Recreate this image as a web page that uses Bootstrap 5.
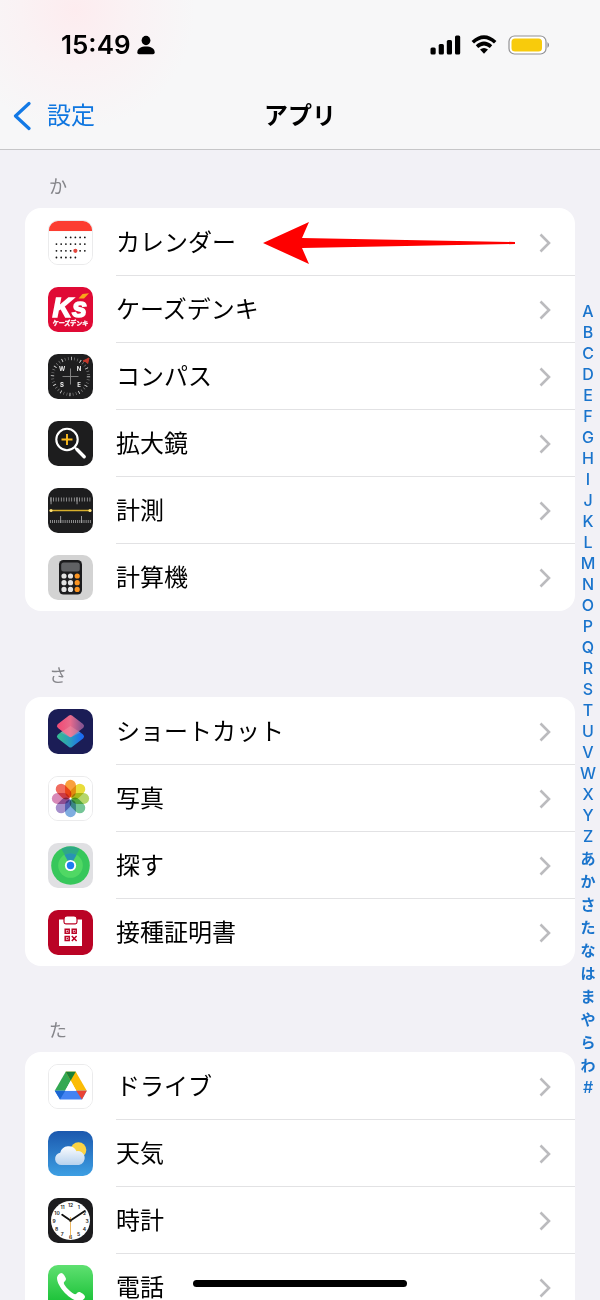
<!DOCTYPE html>
<html lang="ja">
<head>
<meta charset="utf-8">
<meta name="viewport" content="width=device-width, initial-scale=1">
<title>アプリ</title>
<link href="https://cdn.jsdelivr.net/npm/bootstrap@5.3.0/dist/css/bootstrap.min.css" rel="stylesheet">
<style>
  body { font-family: Inter, "Noto Sans CJK JP", sans-serif; background: #f2f1f6; color: #000; }
  a { text-decoration: none; }
  svg { display: block; flex: none; }
  .top-bar { background: radial-gradient(circle at 75px 10px, #fdecef 0, #faf2f4 55px, #f7f7f8 120px); border-bottom: 1px solid #c6c6c8; }
  .status { height: 82px; padding: 8px 50px 0 61px; }
  .clock-text { font-size: 26px; font-weight: 600; line-height: 32px; }
  .gap-status { gap: 10px; }
  .title-row { height: 67px; }
  .title-row h1 { font-size: 24px; line-height: 32px; font-weight: 700; }
  .back { color: #0f76e0; font-size: 24px; line-height: 32px; padding-left: 12px; }
  .apps { padding-left: 25px; }
  .group-label { font-size: 18px; line-height: 24px; color: #85858a; margin: 0; padding: 53px 24px 9px; font-weight: 400; }
  .apps section:first-child .group-label { padding-top: 25px; }
  .app-list { border-radius: 16px; background: #fff; overflow: hidden; padding-top: 1px; }
  .app-row { height: 67px; padding-left: 23px; gap: 23px; color: #000; font-size: 24px; line-height: 32px; }
  .app-row .cell { border-bottom: 1px solid #e2e2e4; padding: 2px 24px 0 0; gap: 24px; }
  li:last-child .cell { border-bottom-color: transparent; }
  .app-icon { width: 45px; height: 45px; border-radius: 10px; }
  .pale { border: 1px solid #ebebec; }
  .index { width: 25px; padding: 151px 0 0 1px; font-weight: 500; font-size: 16px; }
  .index a { color: #1a74cc; height: 21px; line-height: 21px; }
  .index .kana a { font-size: 15px; height: 23px; line-height: 23px; font-weight: 700; }
  .home-bar { width: 214px; height: 7px; border-radius: 4px; background: #000; bottom: 13px; }
</style>
</head>
<body>
<svg width="0" height="0" class="position-absolute" aria-hidden="true">
  <symbol id="chev" viewBox="0 0 12 20"><path d="M1.500 1.500 10 10l-8.500 8.500" fill="none" stroke="#bbbbbe" stroke-width="2.600"/></symbol>
</svg>
<div class="vh-100 d-flex flex-column overflow-hidden">
  <header class="top-bar flex-shrink-0">
    <div class="status d-flex align-items-center">
      <span class="clock-text">15:49</span>
      <svg class="ms-1" width="20" height="20" viewBox="0 0 20 20"><ellipse cx="11" cy="5.500" rx="4.400" ry="4.700"/><path d="M2.300 17.500c0-4.300 4-6 8.700-6s8.700 1.700 8.700 6q0 1.700-1.700 1.700H4q-1.700 0-1.700-1.700z"/></svg>
      <div class="d-flex align-items-center gap-status ms-auto">
        <svg width="31" height="20" viewBox="0 0 31 20"><rect x="0.500" y="12.500" width="5.200" height="7" rx="1.500"/><rect x="8.700" y="9" width="5.200" height="10.500" rx="1.500"/><rect x="16.800" y="5" width="5.200" height="14.500" rx="1.500"/><rect x="25" y="0.500" width="5.200" height="19" rx="1.500"/></svg>
        <svg width="26" height="20" viewBox="0 0 26 20"><g fill="none" stroke="#000" stroke-width="3.600"><path d="M1.800 7.300Q13-3.100 24.200 7.300"/><path d="M6 11.700Q13 5.300 20 11.700"/></g><path d="M9 14.500q4-3 8 0L13 18.800z"/></svg>
        <svg width="43" height="20" viewBox="0 0 43 20"><rect x="2" y="1" width="37" height="18" rx="5.500" fill="#fff" stroke="#929294" stroke-width="1.200"/><rect x="4.500" y="3.500" width="30.500" height="13" rx="3.500" fill="#f8cb0c"/><path d="M40.500 7q3 3 0 6z" fill="#808083"/></svg>
      </div>
    </div>
    <nav class="title-row row g-0 align-items-center">
      <div class="col"><a href="#" class="back d-flex align-items-center"><svg width="19" height="30" viewBox="0 0 19 30"><path d="M17 2.500 3.500 15 17 27.500" fill="none" stroke="#1279e6" stroke-width="3.200" stroke-linecap="round" stroke-linejoin="round"/></svg><span class="ps-3">設定</span></a></div>
      <h1 class="col-auto m-0">アプリ</h1>
      <div class="col"></div>
    </nav>
  </header>

  <div class="d-flex flex-fill overflow-hidden" style="min-height:0">
    <main class="apps flex-fill">
      <section>
        <h2 class="group-label">か</h2>
        <ul class="app-list list-unstyled m-0">
          <li><a href="#" class="app-row d-flex align-items-center">
            <svg class="app-icon pale" viewBox="0 0 45 45"><rect width="45" height="45" fill="#fff"/><rect x="-2" y="-2" width="49" height="12.500" fill="#fc3d31"/><g stroke="#111" stroke-width="1.900" stroke-linecap="round" stroke-dasharray="0 4.950"><path d="M17.700 17.200h20"/><path d="M7.800 24.200h30"/><path d="M7.800 31.200h30"/><path d="M7.800 38.200h20"/></g><circle cx="27.600" cy="31.200" r="2.200" fill="#e2453b"/></svg>
            <span class="cell flex-fill h-100 d-flex align-items-center">カレンダー
              <svg class="ms-auto" width="252" height="42" viewBox="0 0 252 42"><path d="M0 21 46 0l-7 16 213 4v2L39 26l7 16z" fill="#fe0000"/></svg>
              <svg width="12" height="20"><use href="#chev"/></svg></span></a></li>
          <li><a href="#" class="app-row d-flex align-items-center">
            <svg class="app-icon" viewBox="0 0 45 45"><rect width="45" height="45" fill="#e00a35"/><text x="4.500" y="29.500" font-size="27" font-family="Liberation Sans" font-weight="700" font-style="italic" fill="#fff" stroke="#fff" stroke-width="1.500">Ks</text><path d="m34.500 7 6.500-.8-5 5.300h-5.500z" fill="#f9a51a"/><text x="22.500" y="37.800" font-size="6" text-anchor="middle" font-weight="700" fill="#fff" stroke="#fff" stroke-width=".3" font-family="Noto Sans CJK JP">ケーズデンキ</text></svg>
            <span class="cell flex-fill h-100 d-flex align-items-center">ケーズデンキ<svg class="ms-auto" width="12" height="20"><use href="#chev"/></svg></span></a></li>
          <li><a href="#" class="app-row d-flex align-items-center">
            <svg class="app-icon" viewBox="0 0 45 45"><rect width="45" height="45" fill="#1e1e1f"/><circle cx="22.500" cy="22.500" r="18" fill="none" stroke="#858585" stroke-width="3" stroke-dasharray=".6 2.542"/><circle cx="22.500" cy="22.500" r="18" fill="none" stroke="#ccc" stroke-width="3.400" stroke-dasharray=".8 8.625"/><path d="M22.500 14.500v16M14.500 22.500h16" stroke="#8a8a8a" stroke-width=".9"/><g fill="#eee" font-size="6" font-weight="700" font-family="Inter" text-anchor="middle"><text x="14" y="16.500">W</text><text x="31" y="16.500">N</text><text x="14" y="33">S</text><text x="31" y="33">E</text></g><path d="m41 4-1.300 5.500-1.700-1.700-3-.8z" fill="#c5392c" stroke="#c5392c"/></svg>
            <span class="cell flex-fill h-100 d-flex align-items-center">コンパス<svg class="ms-auto" width="12" height="20"><use href="#chev"/></svg></span></a></li>
          <li><a href="#" class="app-row d-flex align-items-center">
            <svg class="app-icon" viewBox="0 0 45 45"><rect width="45" height="45" fill="#1d1d1e"/><circle cx="19" cy="18.500" r="10.700" fill="#181819" stroke="#fff" stroke-width="2.100"/><path d="m27 26.500 2.500 2.500" stroke="#fff" stroke-width="2"/><path d="m29 28.500 7.200 7.200" stroke="#fff" stroke-width="3.400" stroke-linecap="round"/><path d="M19 13v11M13.500 18.500h11" stroke="#f9b920" stroke-width="1.900"/></svg>
            <span class="cell flex-fill h-100 d-flex align-items-center">拡大鏡<svg class="ms-auto" width="12" height="20"><use href="#chev"/></svg></span></a></li>
          <li><a href="#" class="app-row d-flex align-items-center">
            <svg class="app-icon" viewBox="0 0 45 45"><rect width="45" height="45" fill="#1d1d1e"/><g fill="none" stroke="#aaa"><path d="M2.500 11.500h40" stroke-width="4" stroke-dasharray=".8 1.800"/><path d="M2.600 12.800h40" stroke-width="7" stroke-dasharray=".9 25.100"/><path d="M2 33.500h41" stroke-width="3" stroke-dasharray=".8 1.300"/><path d="M12.200 31.500h30" stroke-width="7" stroke-dasharray=".9 20"/></g><path d="M3 22.500h39" stroke="#d8b02c" stroke-width="1.400"/><circle cx="3" cy="22.500" r="1.600" fill="#ffe37a"/><circle cx="42" cy="22.500" r="1.600" fill="#ffe37a"/></svg>
            <span class="cell flex-fill h-100 d-flex align-items-center">計測<svg class="ms-auto" width="12" height="20"><use href="#chev"/></svg></span></a></li>
          <li><a href="#" class="app-row d-flex align-items-center">
            <svg class="app-icon" viewBox="0 0 45 45"><rect width="45" height="45" fill="#d3d3d3"/><rect x="11" y="5" width="23" height="34.500" rx="4.500" fill="#1c1c1e"/><rect x="13.200" y="7.500" width="18.600" height="9" rx="2.500" fill="#606164"/><g stroke="#e2e2e2" stroke-width="5.200" stroke-linecap="round"><path d="M16 21v0M16 27.700v0M16 34.400v0M22.500 21v0M22.500 27.700v0M22.500 34.400v0"/><path stroke="#fb9422" d="M29.200 21v0M29.200 27.700v0M29.200 34.400v0"/></g></svg>
            <span class="cell flex-fill h-100 d-flex align-items-center">計算機<svg class="ms-auto" width="12" height="20"><use href="#chev"/></svg></span></a></li>
        </ul>
      </section>
      <section>
        <h2 class="group-label">さ</h2>
        <ul class="app-list list-unstyled m-0">
          <li><a href="#" class="app-row d-flex align-items-center">
            <svg class="app-icon" viewBox="0 0 45 45"><defs><linearGradient id="sa" x1="0" x2="1"><stop stop-color="#ef4f78"/><stop offset=".5" stop-color="#e86b8c"/><stop offset="1" stop-color="#8a5590"/></linearGradient><linearGradient id="sb" x1="0" x2="1"><stop stop-color="#34b795"/><stop offset=".5" stop-color="#2a9bc0"/><stop offset="1" stop-color="#1c6cf0"/></linearGradient></defs><rect width="45" height="45" fill="#1b1d56"/><path d="m22.500 19 11 8.500-11 8.500-11-8.500z" fill="url(#sb)" stroke="url(#sb)" stroke-width="5" stroke-linejoin="round"/><path d="m22.500 8.500 11 8.500-11 8.500-11-8.500z" fill="url(#sa)" stroke="url(#sa)" stroke-width="5" stroke-linejoin="round"/><path d="m22.500 17 10 6.500-10 5-10-5z" fill="#f5a9b5" opacity=".3"/></svg>
            <span class="cell flex-fill h-100 d-flex align-items-center">ショートカット<svg class="ms-auto" width="12" height="20"><use href="#chev"/></svg></span></a></li>
          <li><a href="#" class="app-row d-flex align-items-center">
            <svg class="app-icon pale" viewBox="0 0 45 45"><defs><rect id="petal" x="-5.700" y="-19.500" width="11.400" height="18.500" rx="5.700"/></defs><rect width="45" height="45" fill="#fff"/><g transform="translate(22.500 22.500)"><use href="#petal" fill="#f9a03c" style="mix-blend-mode:multiply"/><use href="#petal" fill="#e9dd3a" transform="rotate(45)" style="mix-blend-mode:multiply"/><use href="#petal" fill="#b5d66a" transform="rotate(90)" style="mix-blend-mode:multiply"/><use href="#petal" fill="#74c596" transform="rotate(135)" style="mix-blend-mode:multiply"/><use href="#petal" fill="#7fade0" transform="rotate(180)" style="mix-blend-mode:multiply"/><use href="#petal" fill="#a58fcb" transform="rotate(225)" style="mix-blend-mode:multiply"/><use href="#petal" fill="#d88ab8" transform="rotate(270)" style="mix-blend-mode:multiply"/><use href="#petal" fill="#f06c60" transform="rotate(315)" style="mix-blend-mode:multiply"/></g></svg>
            <span class="cell flex-fill h-100 d-flex align-items-center">写真<svg class="ms-auto" width="12" height="20"><use href="#chev"/></svg></span></a></li>
          <li><a href="#" class="app-row d-flex align-items-center">
            <svg class="app-icon" viewBox="0 0 45 45"><rect width="45" height="45" fill="#e0e0e3"/><circle cx="22.500" cy="22.500" r="19.300" fill="#37c75b"/><circle cx="22.500" cy="22.500" r="12.300" fill="#50d864"/><path d="m22.500 22.500-9-16.500a19 19 0 0 1 18 0z" fill="#2a9a9d" opacity=".65"/><path d="m22.500 22.500-6-10.500a12.500 12.500 0 0 1 12 0z" fill="#2388c4" opacity=".7"/><circle cx="22.500" cy="22.500" r="5.600" fill="#fff"/><circle cx="22.500" cy="22.500" r="3.700" fill="#1f7df0"/></svg>
            <span class="cell flex-fill h-100 d-flex align-items-center">探す<svg class="ms-auto" width="12" height="20"><use href="#chev"/></svg></span></a></li>
          <li><a href="#" class="app-row d-flex align-items-center">
            <svg class="app-icon" viewBox="0 0 45 45"><rect width="45" height="45" fill="#ba0325"/><path d="M11 9.500h23V36H11z" fill="#fff"/><path d="M16 9q0-3 3-3h7q3 0 3 3v3q0 1.800-1.800 1.800h-9.400Q16 13.800 16 12z" fill="#fff" stroke="#ba0325" stroke-width="1.200"/><g fill="none" stroke="#ba0325" stroke-width="1.500"><path d="M17.200 19.200h4v4h-4zM24.200 19.200h4v4h-4zM17.200 26.500h4v4h-4z"/><path d="m23.800 26 4.800 5M28.600 26l-4.800 5"/></g><path d="M18.500 20.500h1.500V22h-1.500zM25.500 20.500H27V22h-1.500zM18.500 27.800H20v1.500h-1.500z" fill="#ba0325"/></svg>
            <span class="cell flex-fill h-100 d-flex align-items-center">接種証明書<svg class="ms-auto" width="12" height="20"><use href="#chev"/></svg></span></a></li>
        </ul>
      </section>
      <section>
        <h2 class="group-label">た</h2>
        <ul class="app-list list-unstyled m-0">
          <li><a href="#" class="app-row d-flex align-items-center">
            <svg class="app-icon pale" viewBox="0 0 45 45"><rect width="45" height="45" fill="#fff"/><path d="M17.500 7 6 27h11l11-20z" fill="#33a852"/><path d="M28 7H17.500L28.500 27H39.500z" fill="#fbbc05"/><path d="M17.500 7H28l-5.300 9.300z" fill="#188038"/><path d="M6 27h33.500l-5 9h-23z" fill="#4483f3"/><path d="M6 27h11l-5.500 9z" fill="#1a66d2"/><path d="M28.500 27h11l-5 9z" fill="#e94335"/><path d="M22.700 16.300 28.600 27H16.800z" fill="#fff"/></svg>
            <span class="cell flex-fill h-100 d-flex align-items-center">ドライブ<svg class="ms-auto" width="12" height="20"><use href="#chev"/></svg></span></a></li>
          <li><a href="#" class="app-row d-flex align-items-center">
            <svg class="app-icon" viewBox="0 0 45 45"><defs><linearGradient id="sky" x2="0" y2="1"><stop stop-color="#1b58ae"/><stop offset="1" stop-color="#3d9fe3"/></linearGradient><linearGradient id="cloud" x2="0" y2="1"><stop stop-color="#fbfcfe"/><stop offset="1" stop-color="#b7d2ee"/></linearGradient></defs><rect width="45" height="45" fill="url(#sky)"/><circle cx="30.500" cy="19" r="7.800" fill="#fcd344"/><path d="M13.500 34a6.200 6.200 0 0 1-1.300-12.300 8.700 8.700 0 0 1 16.300-1.500 6.900 6.900 0 0 1 2.500 13.800z" fill="url(#cloud)"/></svg>
            <span class="cell flex-fill h-100 d-flex align-items-center">天気<svg class="ms-auto" width="12" height="20"><use href="#chev"/></svg></span></a></li>
          <li><a href="#" class="app-row d-flex align-items-center">
            <svg class="app-icon" viewBox="0 0 45 45"><rect width="45" height="45" fill="#1c1c1e"/><circle cx="22.500" cy="22.500" r="19.500" fill="#fff"/><g font-size="5" font-weight="600" font-family="Inter" fill="#222" text-anchor="middle"><text x="22.500" y="8.500">12</text><text x="30.700" y="10.700">1</text><text x="36.500" y="16.500">2</text><text x="39" y="24.500">3</text><text x="36.500" y="32.500">4</text><text x="30.700" y="38.200">5</text><text x="22.500" y="40.500">6</text><text x="14.300" y="38.200">7</text><text x="8.500" y="32.500">8</text><text x="6" y="24.500">9</text><text x="9" y="16.500">10</text><text x="14.500" y="10.700">11</text></g><path d="M22.500 22.500 14.200 16.800M22.500 22.500 36.800 13" stroke="#111" stroke-width="1.900" stroke-linecap="round"/><path d="M22.500 19v22" stroke="#e9a63a" stroke-width=".8"/><circle cx="22.500" cy="22.500" r="1.400" fill="#3c3120"/></svg>
            <span class="cell flex-fill h-100 d-flex align-items-center">時計<svg class="ms-auto" width="12" height="20"><use href="#chev"/></svg></span></a></li>
          <li><a href="#" class="app-row d-flex align-items-center">
            <svg class="app-icon" viewBox="0 0 45 45"><defs><linearGradient id="call" x2="0" y2="1"><stop stop-color="#5fe071"/><stop offset="1" stop-color="#0dbb2c"/></linearGradient></defs><rect width="45" height="45" fill="url(#call)"/><path d="M9 13c0-2 2.500-5 4.300-5 1.700 0 4.200 3.800 4.600 5.400.5 2-2.100 2.900-2.100 4.600 0 2.500 8.600 11.200 11.200 11.200 1.800 0 2.500-2.600 4.600-2.200 1.600.4 5.400 3 5.400 4.700 0 1.800-3 4.300-5 4.500C23.500 37 9 22 9 13z" fill="#fff"/></svg>
            <span class="cell flex-fill h-100 d-flex align-items-center">電話<svg class="ms-auto" width="12" height="20"><use href="#chev"/></svg></span></a></li>
        </ul>
      </section>
    </main>
    <nav class="index d-flex flex-column text-center flex-shrink-0" aria-label="索引">
      <a href="#">A</a><a href="#">B</a><a href="#">C</a><a href="#">D</a><a href="#">E</a><a href="#">F</a><a href="#">G</a><a href="#">H</a><a href="#">I</a><a href="#">J</a><a href="#">K</a><a href="#">L</a><a href="#">M</a><a href="#">N</a><a href="#">O</a><a href="#">P</a><a href="#">Q</a><a href="#">R</a><a href="#">S</a><a href="#">T</a><a href="#">U</a><a href="#">V</a><a href="#">W</a><a href="#">X</a><a href="#">Y</a><a href="#">Z</a>
      <div class="kana d-flex flex-column"><a href="#">あ</a><a href="#">か</a><a href="#">さ</a><a href="#">た</a><a href="#">な</a><a href="#">は</a><a href="#">ま</a><a href="#">や</a><a href="#">ら</a><a href="#">わ</a></div>
      <a href="#">#</a>
    </nav>
  </div>
</div>
<div class="home-bar position-fixed start-50 translate-middle-x"></div>
<script src="https://cdn.jsdelivr.net/npm/bootstrap@5.3.0/dist/js/bootstrap.bundle.min.js"></script>
</body>
</html>
